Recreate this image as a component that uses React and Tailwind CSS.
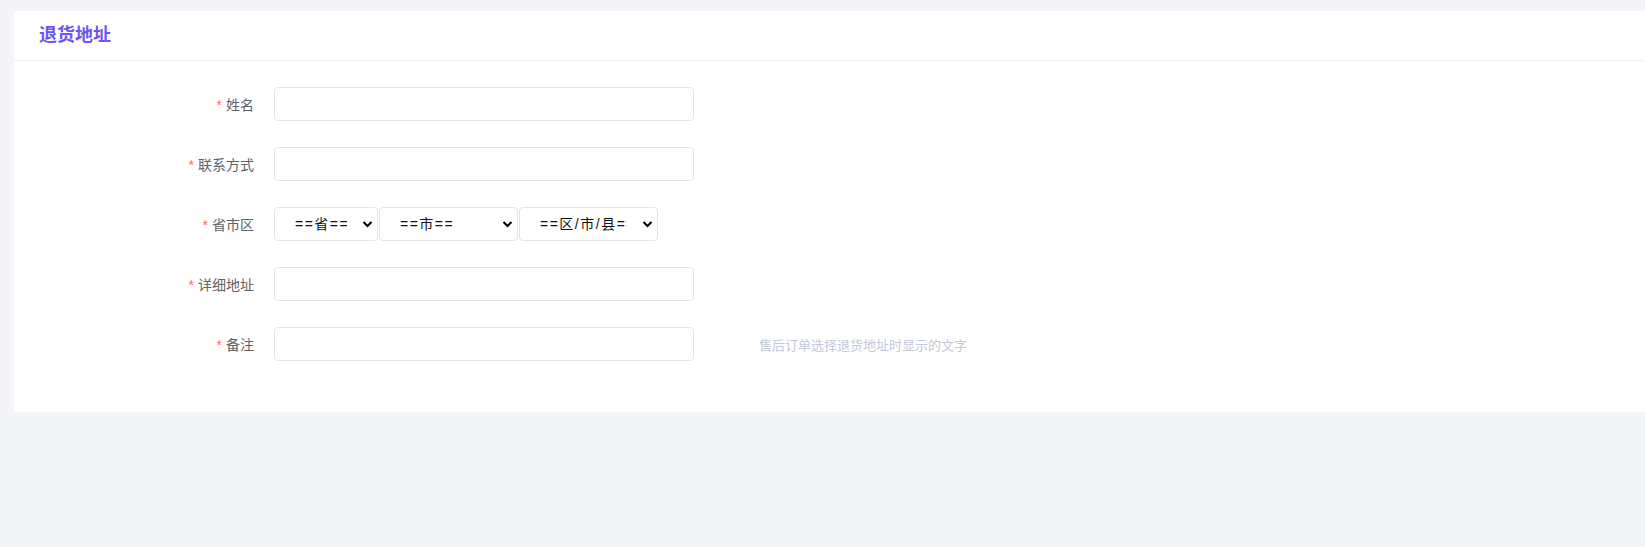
import React from "react";

const FONT = { fontFamily: '"Liberation Sans", "Noto Sans CJK SC", sans-serif' };

function Chevron() {
  return (
    <svg
      className="pointer-events-none absolute right-[5px] top-1/2 -translate-y-1/2"
      width="11"
      height="10"
      viewBox="0 0 11 10"
    >
      <path d="M1.5 3 L5.5 7 L9.5 3" fill="none" stroke="#000" strokeWidth="2" />
    </svg>
  );
}

function Select({ w, label }) {
  return (
    <div className={`relative ${w} h-[34px]`}>
      <select
        className="appearance-none w-full h-full border border-[#e5e5e5] rounded-[4px] bg-white pl-[20px] pr-[30px] text-[14px] tracking-[1.5px] font-normal text-[#111] outline-none"
        style={FONT}
        defaultValue=""
      >
        <option value="">{label}</option>
      </select>
      <Chevron />
    </div>
  );
}

function Row({ label, children, last }) {
  return (
    <div className={`flex items-center ${last ? "" : "mb-[26px]"}`}>
      <div className="w-[260px] pr-[20px] pt-[3px] text-right text-[14px] text-[#606266] shrink-0">
        <span className="text-[#f56c6c] mr-[4px]">*</span>
        {label}
      </div>
      {children}
    </div>
  );
}

function Input() {
  return (
    <input
      type="text"
      className="w-[420px] h-[34px] border border-[#e5e5e5] rounded-[4px] bg-white px-[10px] text-[14px] outline-none"
    />
  );
}

export default function App() {
  return (
    <div className="min-h-[547px] bg-[#f4f5f9] pt-[11px] pl-[14px]" style={FONT}>
      <div className="bg-white rounded-l-[4px]">
        <div className="h-[50px] border-b border-[#f0f0f0] pl-[25px] flex items-center">
          <h2 className="text-[18px] font-bold text-[#6a55f5]">退货地址</h2>
        </div>
        <div className="pt-[26px] pb-[51px]">
          <Row label="姓名">
            <Input />
          </Row>
          <Row label="联系方式">
            <Input />
          </Row>
          <Row label="省市区">
            <div className="flex gap-[1px]">
              <Select w="w-[104px]" label="==省==" />
              <Select w="w-[139px]" label="==市==" />
              <Select w="w-[139px]" label="==区/市/县==" />
            </div>
          </Row>
          <Row label="详细地址">
            <Input />
          </Row>
          <Row label="备注" last>
            <Input />
            <span className="ml-[65px] pt-[3px] text-[13px] text-[#c4c8da]">售后订单选择退货地址时显示的文字</span>
          </Row>
        </div>
      </div>
    </div>
  );
}
